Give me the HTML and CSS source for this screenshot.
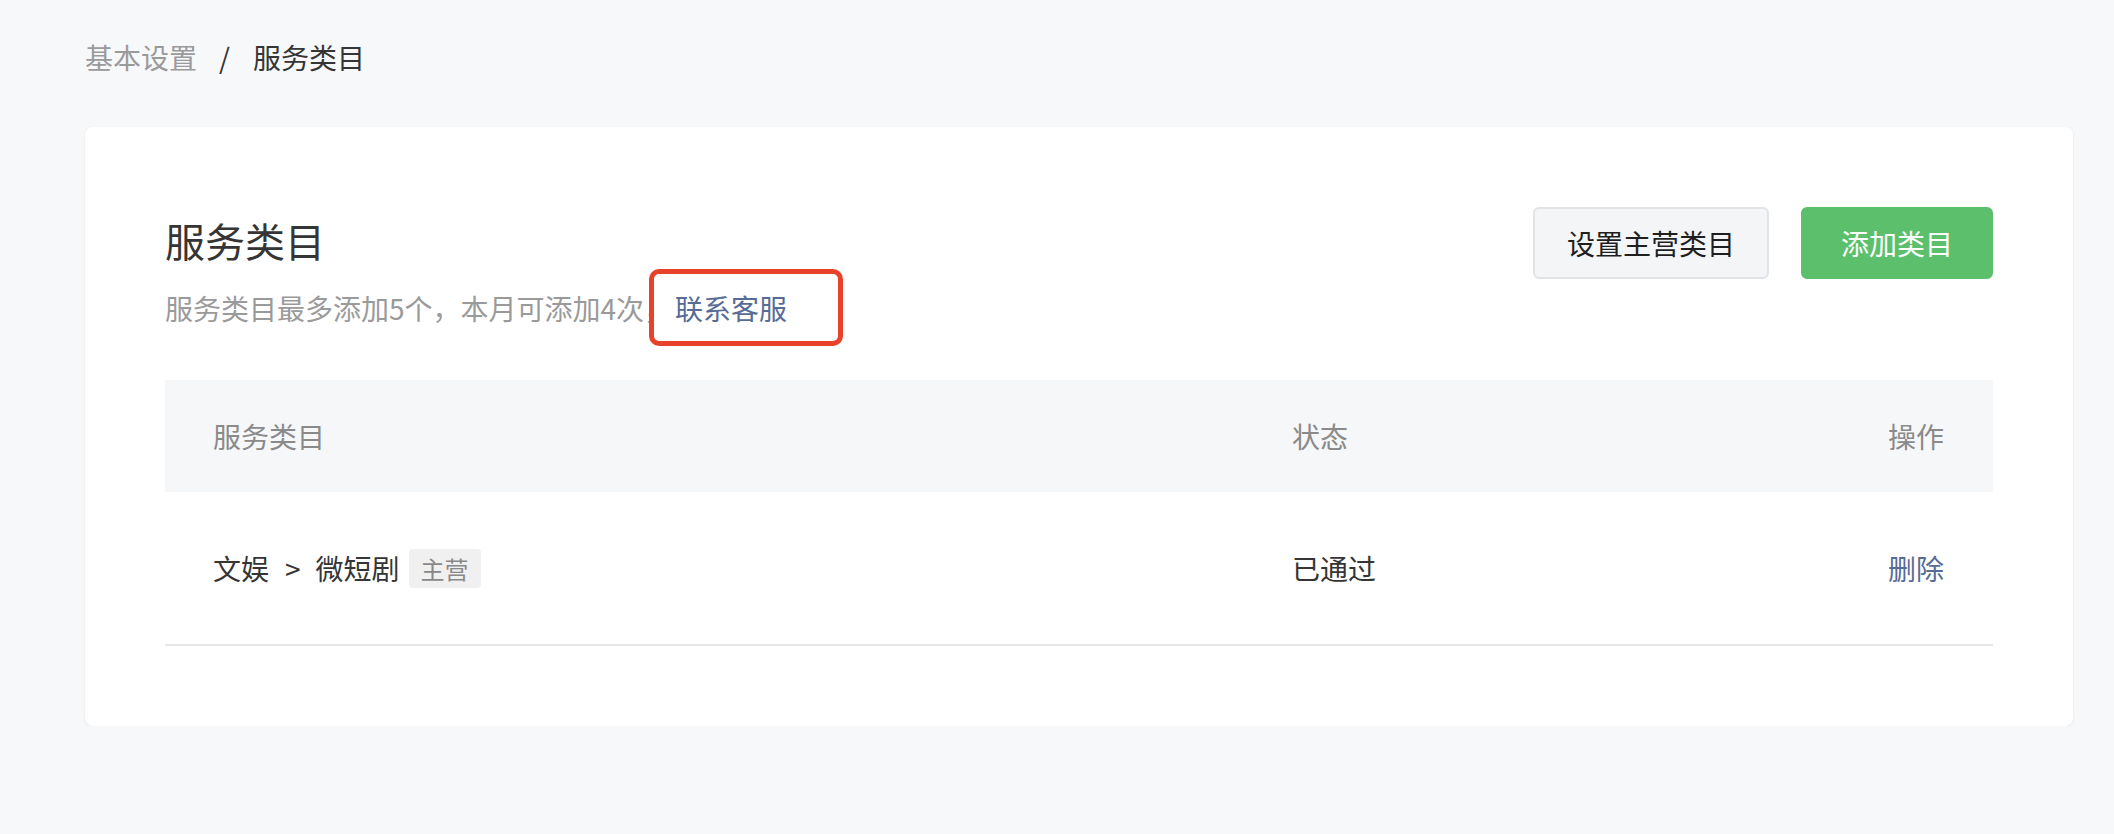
FILE: index.html
```html
<!DOCTYPE html>
<html lang="zh-CN">
<head>
<meta charset="utf-8">
<title>服务类目</title>
<link rel="stylesheet" href="styles.css">
</head>
<body>
<div class="page">
  <nav class="breadcrumb">
    <span class="crumb-link">基本设置</span>
    <span class="crumb-sep">/</span>
    <span class="crumb-current">服务类目</span>
  </nav>

  <section class="card">
    <div class="card-head">
      <div class="head-text">
        <h1 class="title">服务类目</h1>
        <p class="desc">服务类目最多添加5个，本月可添加4次，<span class="annot"><a class="link">联系客服</a></span></p>
      </div>
      <div class="actions">
        <button class="btn btn-default">设置主营类目</button>
        <button class="btn btn-primary">添加类目</button>
      </div>
    </div>

    <div class="table">
      <div class="thead">
        <div class="cell">服务类目</div>
        <div class="cell">状态</div>
        <div class="cell cell-right">操作</div>
      </div>
      <div class="trow">
        <div class="cell">文娱<span class="arrow">&gt;</span>微短剧<span class="tag">主营</span></div>
        <div class="cell">已通过</div>
        <div class="cell cell-right"><a class="link">删除</a></div>
      </div>
    </div>
  </section>
</div>
</body>
</html>
```

FILE: styles.css
```css
*, *::before, *::after { box-sizing: border-box; }

html, body {
  margin: 0;
  padding: 0;
  background: #f7f8fa;
}

body {
  font-family: "Noto Sans CJK SC", "Noto Sans", sans-serif;
  color: #353535;
}

.page {
  padding: 37px 41px 0 85px;
}

.breadcrumb {
  display: flex;
  align-items: center;
  font-size: 28px;
  line-height: 40px;
  height: 40px;
}

.crumb-link { color: #9a9a9a; }
.crumb-sep { color: #353535; margin: 0 23px 0 22px; }
.crumb-current { color: #353535; }

.card {
  margin-top: 50px;
  background: #fff;
  border-radius: 8px;
  box-shadow: 0 1px 3px rgba(0, 0, 0, 0.08);
  padding: 80px 80px 80px 80px;
}

.card-head {
  display: flex;
  justify-content: space-between;
  align-items: flex-start;
}

.title {
  margin: 0;
  font-size: 40px;
  font-weight: 400;
  line-height: 66px;
  color: #353535;
}

.desc {
  margin: 15px 0 0 0;
  font-size: 28px;
  line-height: 40px;
  color: #9a9a9a;
}

.link {
  color: #576b95;
  text-decoration: none;
}

.annot {
  position: relative;
  display: inline-block;
  margin-left: 3px;
}

.annot::after {
  content: "";
  position: absolute;
  left: -26px;
  top: -19px;
  width: 194px;
  height: 77px;
  border: 5px solid #e8432a;
  border-radius: 10px;
}

.actions {
  display: flex;
  gap: 32px;
}

.btn {
  font-family: inherit;
  font-size: 28px;
  height: 72px;
  line-height: 68px;
  border-radius: 6px;
  border: 2px solid transparent;
  padding: 0 32px;
  cursor: pointer;
}

.btn-default {
  background: #f4f5f7;
  border-color: #e2e3e6;
  color: #1f1f1f;
  width: 236px;
}

.btn-primary {
  background: #5bbf6b;
  border-color: #5bbf6b;
  color: #fff;
  width: 192px;
}

.table {
  margin-top: 52px;
}

.thead, .trow {
  display: grid;
  grid-template-columns: 1079px 1fr auto;
  align-items: center;
  padding: 0 49px 0 48px;
  font-size: 28px;
}

.thead {
  height: 112px;
  background: #f6f7f9;
  color: #8a8a8a;
}

.trow {
  height: 154px;
  border-bottom: 2px solid #e6e6eb;
  color: #353535;
}

.cell {
  display: flex;
  align-items: center;
}

.cell-right {
  justify-content: flex-end;
}

.arrow {
  margin: 0 15px 0 16px;
}

.tag {
  display: inline-block;
  margin-left: 9px;
  height: 39px;
  line-height: 39px;
  padding: 0 12px;
  font-size: 24px;
  color: #888;
  background: #f0f0f1;
  border-radius: 4px;
}
```
